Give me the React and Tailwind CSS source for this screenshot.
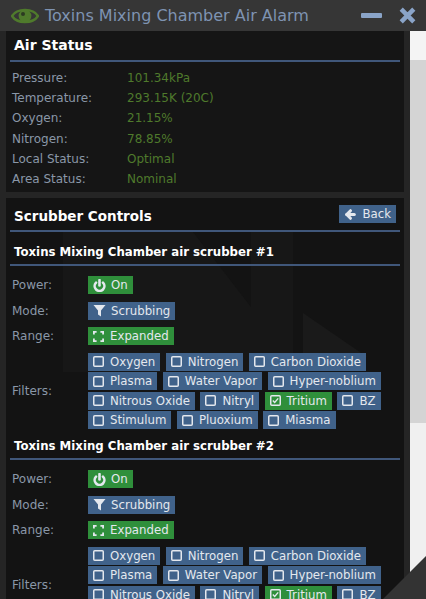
import React from 'react';
import { Power, ArrowLeft } from 'lucide-react';

const airRows = [
  ['Pressure:', '101.34kPa'],
  ['Temperature:', '293.15K (20C)'],
  ['Oxygen:', '21.15%'],
  ['Nitrogen:', '78.85%'],
  ['Local Status:', 'Optimal'],
  ['Area Status:', 'Nominal'],
];

const filterRows = [
  [['Oxygen'], ['Nitrogen'], ['Carbon Dioxide']],
  [['Plasma'], ['Water Vapor'], ['Hyper-noblium']],
  [['Nitrous Oxide'], ['Nitryl'], ['Tritium', true], ['BZ']],
  [['Stimulum'], ['Pluoxium'], ['Miasma']],
];

const Btn = ({ green, children, className = '' }) => (
  <span className={`inline-flex items-center h-[18px] whitespace-nowrap text-[11.75px] leading-[18px] text-[#e4e8ee] ${green ? 'bg-[#2f8f3b]' : 'bg-[#40628a]'} ${className}`}>
    {children}
  </span>
);

const CheckBox = ({ on }) => (
  <svg width="11" height="11" viewBox="0 0 11 11" className="shrink-0">
    <rect x="0.75" y="0.75" width="9.5" height="9.5" rx="1" fill="none" stroke="currentColor" strokeWidth="1.5" />
    {on && <path d="M2.8 5.4 L4.7 7.4 L8.2 3.4" fill="none" stroke="currentColor" strokeWidth="1.4" />}
  </svg>
);

const RangeIcon = () => (
  <svg width="11" height="11" viewBox="0 0 11 11" className="shrink-0">
    <path d="M0.9 3.6 V0.9 H3.6 M7.4 0.9 H10.1 V3.6 M10.1 7.4 V10.1 H7.4 M3.6 10.1 H0.9 V7.4" fill="none" stroke="currentColor" strokeWidth="1.8" />
  </svg>
);

const FunnelIcon = () => (
  <svg width="13" height="13" viewBox="0 0 13 13" className="shrink-0">
    <path d="M0.5 1 H12.5 L8 6.5 V12.5 L5 10.5 V6.5 Z" fill="currentColor" />
  </svg>
);

const ControlRow = ({ label, children }) => (
  <div className="flex items-center">
    <div className="w-[76px] shrink-0 text-[12px] text-[#8a97a8]">{label}</div>
    <div className="flex">{children}</div>
  </div>
);

const Scrubber = ({ n }) => (
  <div>
    <div className="h-[31px] mx-[4px] border-b-2 border-[#40577a] flex items-center pt-[7px] pl-[4px] text-[11.75px] font-bold text-white">
      Toxins Mixing Chamber air scrubber #{n}
    </div>
    <div className="pl-[6px] pt-[10px] flex flex-col gap-[7.5px]">
      <ControlRow label="Power:">
        <Btn green className="px-[5px] gap-[5px]"><Power size={13} strokeWidth={2.6} absoluteStrokeWidth />On</Btn>
      </ControlRow>
      <ControlRow label="Mode:">
        <Btn className="px-[5px] gap-[5px]"><FunnelIcon />Scrubbing</Btn>
      </ControlRow>
      <ControlRow label="Range:">
        <Btn green className="px-[5px] gap-[6px]"><RangeIcon />Expanded</Btn>
      </ControlRow>
      <ControlRow label="Filters:">
        <div className="flex flex-col gap-[1.6px]">
          {filterRows.map((row, i) => (
            <div key={i} className="flex gap-[5.5px]">
              {row.map(([name, on]) => (
                <Btn key={name} green={on} className="px-[5px] gap-[6px]"><CheckBox on={on} />{name}</Btn>
              ))}
            </div>
          ))}
        </div>
      </ControlRow>
    </div>
  </div>
);

export default function App() {
  return (
    <div className='w-[426px] h-[599px] overflow-hidden relative bg-[#252525] font-["DejaVu_Sans",sans-serif]'>
      {/* title bar */}
      <div className="h-[31px] bg-[#363636] flex items-center pl-[11px] pr-[10px]">
        <svg width="28" height="20" viewBox="0 0 28 20" className="shrink-0">
          <path d="M1 10 C6 2 22 2 27 10 C22 18 6 18 1 10 Z" fill="none" stroke="#4f7a2c" strokeWidth="2.4" />
          <circle cx="14" cy="10" r="6.4" fill="#4f7a2c" />
          <circle cx="12" cy="8" r="2" fill="#2c3a22" />
        </svg>
        <div className="ml-[6px] text-[16px] text-[#7e93b2] whitespace-nowrap">Toxins Mixing Chamber Air Alarm</div>
        <div className="ml-auto flex items-center gap-[17px]">
          <div className="w-[21px] h-[5px] bg-[#8aa4c8] rounded-[1px]" />
          <svg width="17" height="17" viewBox="0 0 17 17">
            <path d="M2.2 2.2 L14.8 14.8 M14.8 2.2 L2.2 14.8" stroke="#8aa4c8" strokeWidth="4.5" />
          </svg>
        </div>
      </div>

      <div className="flex h-[568px]">
        {/* content */}
        <div className="w-[404px] pl-[6px] shrink-0 flex flex-col gap-[6px] overflow-hidden">
          <div className="h-[161px] bg-[#151515] shrink-0">
            <div className="h-[31px] mx-[4px] border-b-2 border-[#40577a] flex items-center pl-[4px] text-[14px] font-bold text-white">
              Air Status
            </div>
            <div className="pl-[6px] pt-[6px]">
              {airRows.map(([k, v]) => (
                <div key={k} className="flex h-[20.2px] items-center text-[12px]">
                  <div className="w-[115px] text-[#8a97a8]">{k}</div>
                  <div className="text-[#4f7a2c]">{v}</div>
                </div>
              ))}
            </div>
          </div>
          <div className="bg-[#131313] relative grow overflow-hidden">
            {/* faint logo behind the controls */}
            <svg width="398" height="140" viewBox="0 0 398 140" className="absolute left-0 top-[34px]">
              <path d="M57 0 H187 L245 75 V0 H287 V140 H57 Z" fill="#171717" />
              <path d="M297 81 L361 125 L297 125 Z" fill="#1a1a1a" />
            </svg>
            <div className="relative">
              <div className="h-[34px] mb-[3px] mx-[4px] border-b-2 border-[#40577a] flex items-center justify-between px-[4px] font-bold text-white">
                <span className="text-[13.5px] pt-[4px]">Scrubber Controls</span>
                <Btn className="font-normal px-[5px] gap-[5px]"><ArrowLeft size={13} strokeWidth={3} absoluteStrokeWidth />Back</Btn>
              </div>
              <Scrubber n={1} />
              <Scrubber n={2} />
            </div>
          </div>
        </div>
        {/* scrollbar gutter, then the page behind */}
        <div className="w-[6px] bg-[#252525] shrink-0" />
        <div className="grow flex flex-col">
          <div className="h-[29px] bg-[#f4f4f4]" />
          <div className="h-[363px] bg-[#d4d4d4]" />
          <div className="grow bg-[#f0f0f0]" />
        </div>
      </div>

      {/* resize corner */}
      <svg width="43" height="43" viewBox="0 0 43 43" className="absolute right-0 bottom-0">
        <path d="M43 0 L43 43 L0 43 Z" fill="#333333" />
      </svg>
    </div>
  );
}
